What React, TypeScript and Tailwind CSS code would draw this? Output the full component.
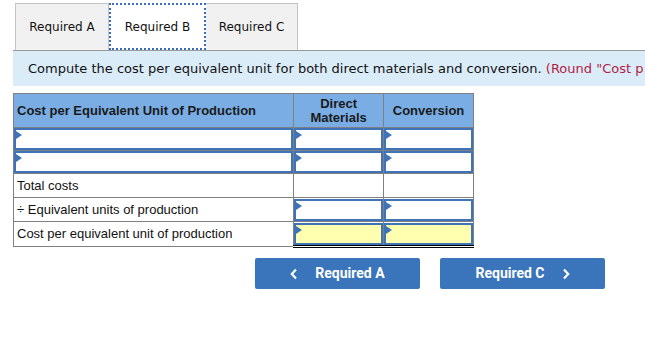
import React from "react";

const verdana = { fontFamily: '"DejaVu Sans", Verdana, sans-serif' };

function Flag() {
  return (
    <span className="absolute left-0 top-[1px] h-0 w-0 border-y-[4px] border-l-[6px] border-y-transparent border-l-[#3f73b8]" />
  );
}

function InputCell({ yellow = false, extra = "" }: { yellow?: boolean; extra?: string }) {
  return (
    <td className={`border border-[#808080] p-0 ${extra}`}>
      <div
        className={`relative h-full min-h-[22px] border-2 border-[#3f73b8] ${
          yellow ? "bg-[#ffffaf]" : "bg-white"
        }`}
      >
        <Flag />
      </div>
    </td>
  );
}

export default function App() {
  return (
    <div className="h-[344px] w-[645px] overflow-hidden bg-white pl-[13px] pt-[3px]">
      {/* tabs */}
      <div className="ml-[2px] flex h-[47px] text-[12px] text-[#111]" style={verdana}>
        <div className="flex w-[94px] items-center justify-center border border-b-0 border-[#c4c4c4] bg-[#f1f1f1]">
          Required A
        </div>
        <div className="flex w-[97px] items-center justify-center border-2 border-dotted border-[#3a6fb5] bg-white">
          Required B
        </div>
        <div className="flex w-[92px] items-center justify-center border border-b-0 border-l-0 border-[#c4c4c4] bg-[#f1f1f1]">
          Required C
        </div>
      </div>

      {/* instruction bar */}
      <div
        className="flex h-[36px] items-center overflow-hidden whitespace-nowrap border-t border-[#9a9a9a] bg-[#dbecf9] pl-[15px] text-[13px] text-[#111]"
        style={verdana}
      >
        Compute the cost per equivalent unit for both direct materials and conversion.&nbsp;
        <span className="text-[#b31d44]">(Round "Cost p</span>
      </div>

      {/* table */}
      <table
        className="mt-[7px] w-[461px] border-collapse text-[13px] text-[#111]"
        style={{ fontFamily: '"Liberation Sans", Arial, sans-serif' }}
      >
        <colgroup>
          <col className="w-[281px]" />
          <col className="w-[90px]" />
          <col className="w-[90px]" />
        </colgroup>
        <thead>
          <tr className="h-[34px] bg-[#79ade4] font-bold text-[#1a1a1a]">
            <th className="border border-[#808080] pl-[3px] text-left">
              Cost per Equivalent Unit of Production
            </th>
            <th className="border border-[#808080] text-center leading-[14px]">
              Direct
              <br />
              Materials
            </th>
            <th className="border border-[#808080] text-center">Conversion</th>
          </tr>
        </thead>
        <tbody>
          <tr className="h-[23px]">
            <InputCell />
            <InputCell />
            <InputCell />
          </tr>
          <tr className="h-[23px]">
            <InputCell />
            <InputCell />
            <InputCell />
          </tr>
          <tr className="h-[24px]">
            <td className="border border-[#808080] pl-[3px]">Total costs</td>
            <td className="border border-[#808080] border-t-black" />
            <td className="border border-[#808080] border-t-black" />
          </tr>
          <tr className="h-[24px]">
            <td className="border border-[#808080] pl-[3px]">÷ Equivalent units of production</td>
            <InputCell />
            <InputCell />
          </tr>
          <tr className="h-[25px]">
            <td className="border border-[#808080] pl-[3px]">Cost per equivalent unit of production</td>
            <InputCell yellow extra="border-b-[3px] border-b-black border-double" />
            <InputCell yellow extra="border-b-[3px] border-b-black border-double" />
          </tr>
        </tbody>
      </table>

      {/* nav buttons */}
      <div
        className="ml-[242px] mt-[10px] flex gap-[20px] text-[14px] font-bold text-white"
        style={{ fontFamily: "Roboto, sans-serif" }}
      >
        <button className="flex h-[31px] w-[165px] items-center justify-center gap-[17px] rounded-[2px] bg-[#3a75bb]">
          <svg width="8" height="12" viewBox="0 0 8 12" fill="none">
            <path d="M6 1.5 1.8 6 6 10.5" stroke="white" strokeWidth="2.2" />
          </svg>
          Required A
        </button>
        <button className="flex h-[31px] w-[165px] items-center justify-center gap-[17px] rounded-[2px] bg-[#3a75bb]">
          Required C
          <svg width="8" height="12" viewBox="0 0 8 12" fill="none">
            <path d="M2 1.5 6.2 6 2 10.5" stroke="white" strokeWidth="2.2" />
          </svg>
        </button>
      </div>
    </div>
  );
}
